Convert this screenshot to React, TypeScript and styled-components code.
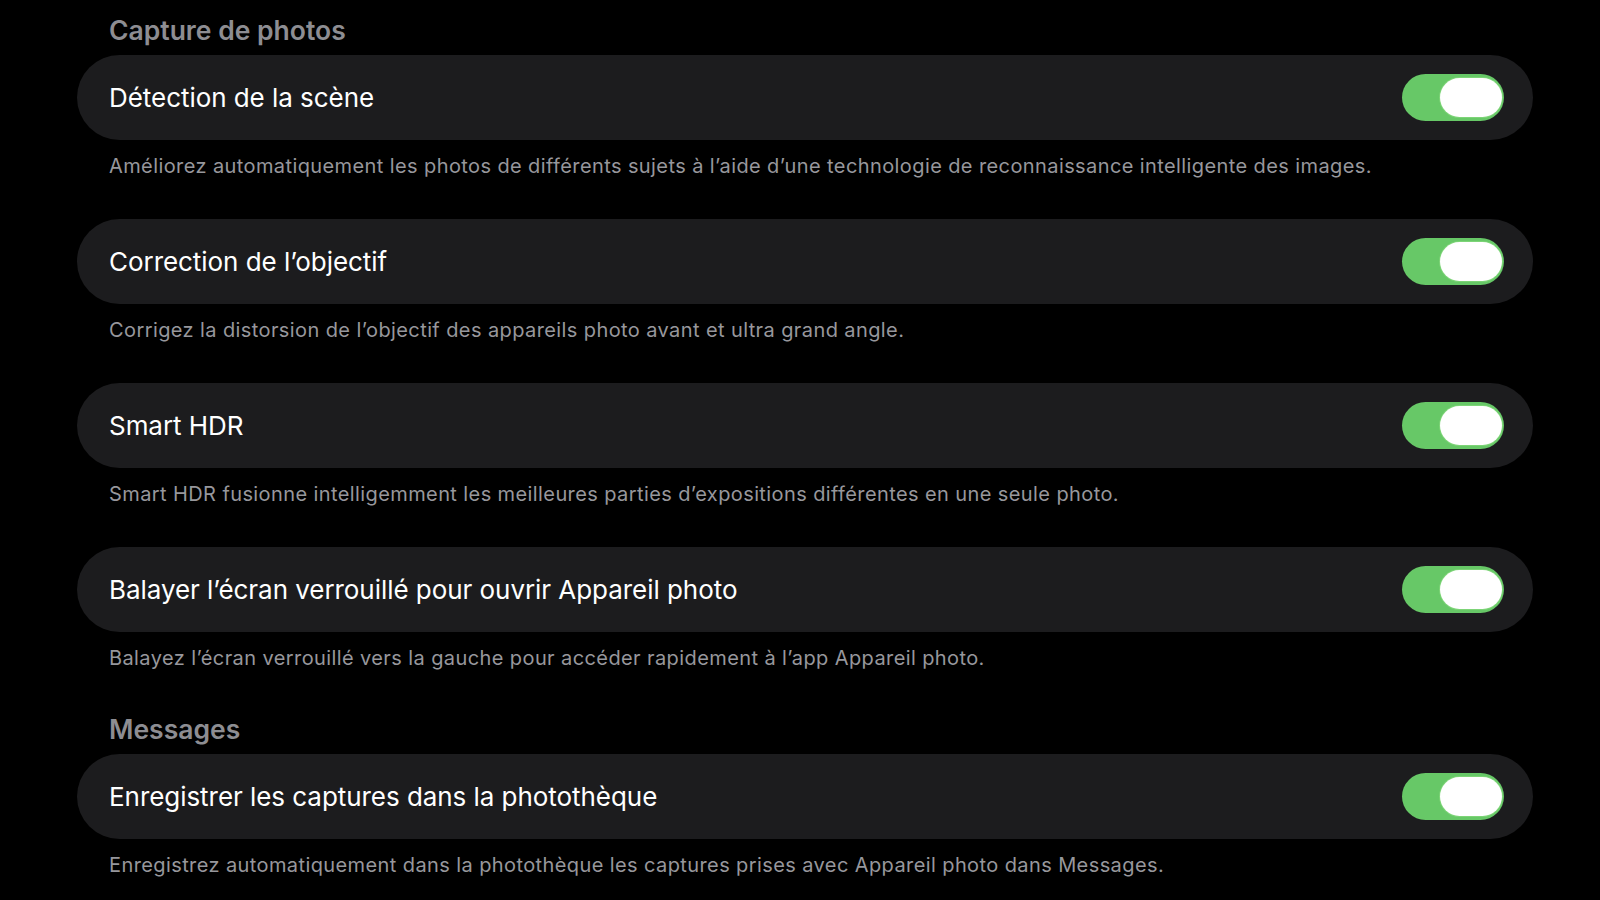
import React from "react";
import styled, { createGlobalStyle } from "styled-components";

const GlobalStyle = createGlobalStyle`
  html, body {
    margin: 0;
    padding: 0;
    background: #000;
  }
  body {
    font-family: Inter, "Noto Sans", "Liberation Sans", sans-serif;
    -webkit-font-smoothing: antialiased;
  }
`;

const Page = styled.main`
  width: 1600px;
  height: 900px;
  overflow: hidden;
  background: #000;
  padding: 13px 67px 0 77px;
  box-sizing: border-box;
`;

const Section = styled.section`
  display: flex;
  flex-direction: column;
  & + & {
    margin-top: 42px;
  }
`;

const SectionTitle = styled.h2`
  margin: 0 0 8px 32px;
  font-size: 26.5px;
  line-height: 34px;
  font-weight: 600;
  color: #8d8d92;
  letter-spacing: 0;
`;

const Item = styled.div`
  display: flex;
  flex-direction: column;
  & + & {
    margin-top: 41px;
  }
`;

const Card = styled.div`
  height: 85px;
  border-radius: 43px;
  background: #1c1c1e;
  display: flex;
  align-items: center;
  justify-content: space-between;
  padding: 0 29px 0 32px;
  box-sizing: border-box;
`;

const Label = styled.span`
  font-size: 26px;
  font-weight: 400;
  color: #ffffff;
  letter-spacing: -0.05px;
`;

const Description = styled.p`
  margin: 14px 0 0 32px;
  font-size: 20px;
  line-height: 24px;
  color: #97979c;
  letter-spacing: 0.4px;
`;

const Track = styled.button<{ $on: boolean }>`
  width: 102px;
  height: 47px;
  border: none;
  border-radius: 24px;
  padding: 0 2px;
  display: flex;
  align-items: center;
  justify-content: ${(p) => (p.$on ? "flex-end" : "flex-start")};
  background: ${(p) => (p.$on ? "#67c867" : "#39393d")};
  cursor: pointer;
`;

const Knob = styled.span`
  width: 62px;
  height: 39px;
  border-radius: 20px;
  background: #ffffff;
  box-shadow: 0 0 0 1px rgba(140, 220, 130, 0.6);
`;

type Setting = { label: string; description: string };

const sections: { title: string; items: Setting[] }[] = [
  {
    title: "Capture de photos",
    items: [
      {
        label: "Détection de la scène",
        description:
          "Améliorez automatiquement les photos de différents sujets à l’aide d’une technologie de reconnaissance intelligente des images.",
      },
      {
        label: "Correction de l’objectif",
        description:
          "Corrigez la distorsion de l’objectif des appareils photo avant et ultra grand angle.",
      },
      {
        label: "Smart HDR",
        description:
          "Smart HDR fusionne intelligemment les meilleures parties d’expositions différentes en une seule photo.",
      },
      {
        label: "Balayer l’écran verrouillé pour ouvrir Appareil photo",
        description:
          "Balayez l’écran verrouillé vers la gauche pour accéder rapidement à l’app Appareil photo.",
      },
    ],
  },
  {
    title: "Messages",
    items: [
      {
        label: "Enregistrer les captures dans la photothèque",
        description:
          "Enregistrez automatiquement dans la photothèque les captures prises avec Appareil photo dans Messages.",
      },
    ],
  },
];

function Toggle({ initial }: { initial: boolean }) {
  const [on, setOn] = React.useState(initial);
  return (
    <Track $on={on} onClick={() => setOn(!on)} aria-pressed={on}>
      <Knob />
    </Track>
  );
}

export default function App() {
  return (
    <>
      <GlobalStyle />
      <Page>
        {sections.map((s) => (
          <Section key={s.title}>
            <SectionTitle>{s.title}</SectionTitle>
            {s.items.map((it) => (
              <Item key={it.label}>
                <Card>
                  <Label>{it.label}</Label>
                  <Toggle initial={true} />
                </Card>
                <Description>{it.description}</Description>
              </Item>
            ))}
          </Section>
        ))}
      </Page>
    </>
  );
}
